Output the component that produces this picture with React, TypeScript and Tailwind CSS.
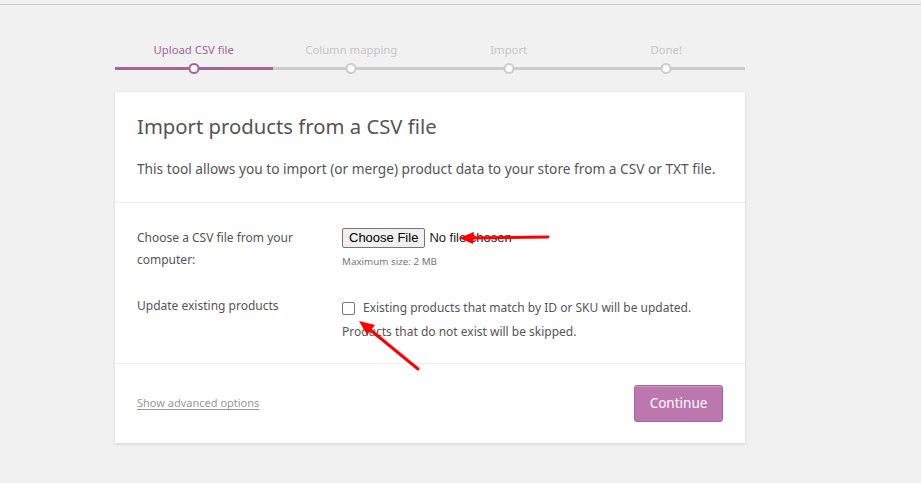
const font = { fontFamily: '"Noto Sans", "Open Sans", sans-serif' }

const steps = ["Upload CSV file", "Column mapping", "Import", "Done!"]

function Stepper() {
  return (
    <div className="grid grid-cols-4 w-[630px] ml-[115px]">
      {steps.map((s, i) => (
        <div key={s} className="flex flex-col items-center">
          <div
            className={`text-[11.3px] leading-[16px] h-[16px] ${i === 0 ? "text-[#a16696]" : "text-[#c5c5c5]"}`}
          >
            {s}
          </div>
          <div className="relative w-full h-[10px] mt-[5px] flex items-center">
            <div className={`w-full h-[3px] ${i === 0 ? "bg-[#a16696]" : "bg-[#cccccc]"}`} />
            <div
              className={`absolute left-1/2 -translate-x-1/2 w-[11px] h-[11px] rounded-full bg-white border-[2.5px] ${i === 0 ? "border-[#a16696]" : "border-[#cccccc]"}`}
            />
          </div>
        </div>
      ))}
    </div>
  )
}

function Arrows() {
  return (
    <svg className="absolute left-0 top-0 pointer-events-none" width="921" height="483">
      <g stroke="#ff0000" strokeWidth="3" strokeLinecap="round" fill="#ff0000">
        <line x1="548" y1="237" x2="470" y2="238" />
        <polygon points="459,238 474,232 473,244" stroke="none" />
        <line x1="418" y1="369" x2="368" y2="328" />
        <polygon points="359,321 375,325 367,335" stroke="none" />
      </g>
    </svg>
  )
}

export default function App() {
  return (
    <div className="relative w-[921px] h-[483px] bg-[#f1f1f1] overflow-hidden" style={font}>
      <div className="h-[4px]" />
      <div className="h-px bg-[#cccccc]" />
      <div className="pt-[37px]">
        <Stepper />
      </div>

      <div className="mt-[19px] ml-[115px] w-[630px] bg-white shadow-[0_1px_3px_rgba(0,0,0,0.13)] text-[#555555]">
        <div className="px-[22px] pt-[20px] pb-[22px] border-b border-[#eeeeee]">
          <h1 className="text-[20.3px] leading-[28px] text-[#555555]">Import products from a CSV file</h1>
          <p className="mt-[18px] text-[13.7px] leading-[22px]">
            This tool allows you to import (or merge) product data to your store from a CSV or TXT file.
          </p>
        </div>

        <div className="px-[22px] pt-[23px] pb-[20px] border-b border-[#eeeeee] text-[12px]">
          <div className="flex">
            <div className="w-[205px] shrink-0 leading-[22px] pt-[1px]">
              Choose a CSV file from your
              <br />
              computer:
            </div>
            <div className="pt-[2px]">
              <div className="flex items-center" style={{ fontFamily: '"Liberation Sans", Arial, sans-serif' }}>
                <button className="h-[20px] px-[6px] text-[13px] text-black bg-[#efefef] border border-[#767676] rounded-[2px] leading-[18px]">
                  Choose File
                </button>
                <span className="ml-[4px] text-[13px] text-[#222222]">No file chosen</span>
              </div>
              <div className="mt-[7px] text-[9.8px] leading-[14px] text-[#777777]">Maximum size: 2 MB</div>
            </div>
          </div>

          <div className="flex mt-[24px]">
            <div className="w-[205px] shrink-0 leading-[22px]">Update existing products</div>
            <div className="w-[370px] pt-[2px]">
              <div className="flex items-center leading-[22px]">
                <span className="w-[13px] h-[13px] shrink-0 border border-[#767676] rounded-[2px] bg-white mr-[8px]" />
                <span className="whitespace-nowrap">Existing products that match by ID or SKU will be updated.</span>
              </div>
              <div className="leading-[22px] mt-[2px]">Products that do not exist will be skipped.</div>
            </div>
          </div>
        </div>

        <div className="px-[22px] h-[79px] flex items-center justify-between">
          <a className="text-[11px] text-[#999999] underline underline-offset-2">Show advanced options</a>
          <button className="w-[89px] h-[37px] bg-[#bb77ae] border border-[#a36597] rounded-[3px] text-white text-[13.5px] shadow-[inset_0_1px_0_rgba(255,255,255,0.25)]">
            Continue
          </button>
        </div>
      </div>

      <Arrows />
    </div>
  )
}
